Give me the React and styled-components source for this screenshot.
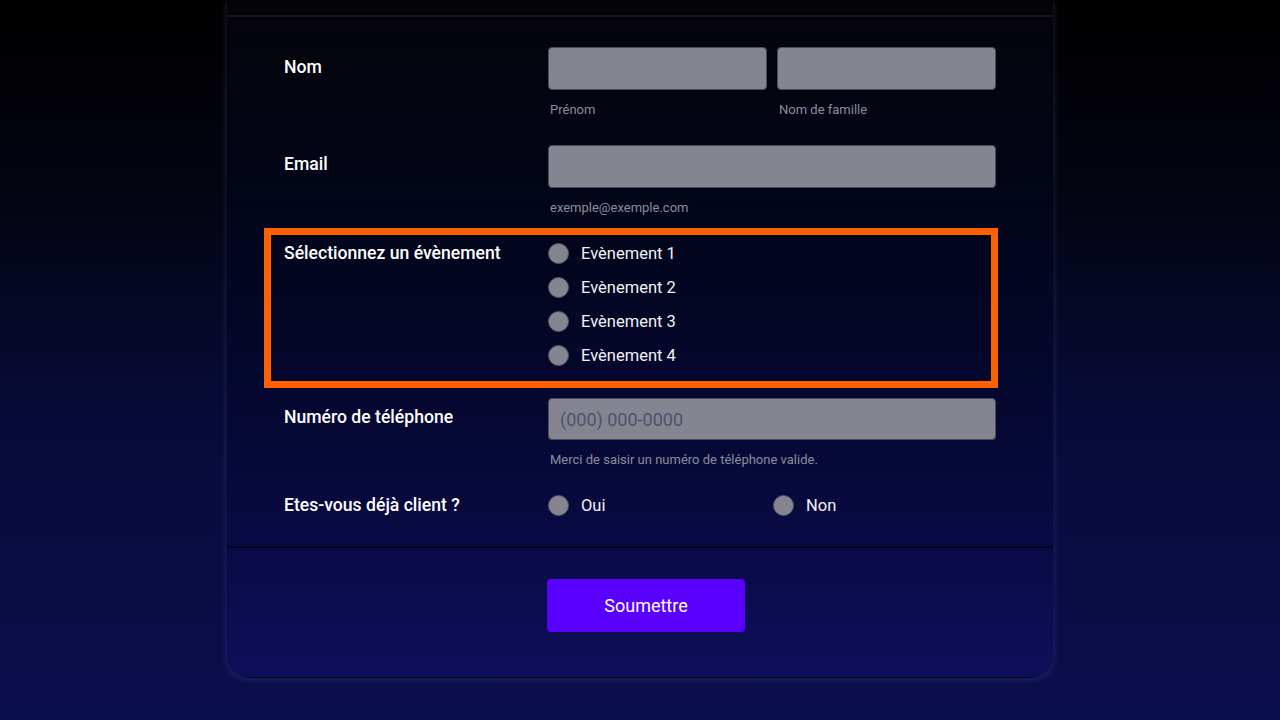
import React from 'react'
import styled, { createGlobalStyle } from 'styled-components';

const GlobalStyle = createGlobalStyle`
html, body { margin:0; padding:0; }
body {
  font-family: Roboto, "Liberation Sans", sans-serif;
  background: linear-gradient(180deg, #000000 0%, #03040f 25%, #080b3a 60%, #0b0e4c 100%);
  min-height: 720px;
}
`;

const Page = styled.div`
min-height:720px;
display:flex;
justify-content:center;
`;

const Card = styled.div`
width:828px;
box-sizing:border-box;
height:678px;
background:linear-gradient(180deg, #040408 0%, #02061f 40%, #08093f 75%, #0e0f5a 100%);
border:1px solid rgba(255, 255, 255, 0.035);
border-top:none;
border-radius:0 0 22px 22px;
box-shadow:0 2px 6px rgba(70, 80, 170, 0.35);
display:flex;
flex-direction:column;
`;

const CardHeader = styled.div`
height:15px;
border-bottom:2px solid #16151f;
`;

const FormBody = styled.div`
padding:20px 38px 14px 37px;
display:flex;
flex-direction:column;
border-bottom:2px solid #06061a;
`;

const Row = styled.div`
width:734px;
box-sizing:border-box;
display:grid;
grid-template-columns:264px 448px;
padding:${p => p.$highlight ? '15px 2px 23px 20px' : '10px 2px 17px 20px'};
margin-top:${p => p.$highlight ? '-5px' : '0'};
outline:${p => p.$highlight ? '7px solid #ff6100' : 'none'};
outline-offset:-7px;
`;

const Label = styled.div`
color:#ffffff;
font-size:17.6px;
font-weight:500;
line-height:20px;
padding-top:${p => p.$top || 0}px;
`;

const Field = styled.div`
display:flex;
flex-direction:column;
`;

const Pair = styled.div`
display:grid;
grid-template-columns:1fr 1fr;
column-gap:10px;
`;

const Input = styled.input`
box-sizing:border-box;
width:100%;
height:${p => p.$h || 43}px;
background:#858592;
border:1px solid #4c4c58;
border-radius:4px;
padding:0 11px;
font-family:Roboto, "Liberation Sans", sans-serif;
font-size:18px;
color:#222;
outline:none;
&::placeholder { color:#4d526c; }
`;

const Hint = styled.div`
margin-top:12px;
padding-left:2px;
font-size:13px;
line-height:16px;
color:#8a8d9c;
`;

const RadioList = styled.div`
display:flex;
flex-direction:column;
gap:14px;
`;

const RadioInline = styled.div`
display:grid;
grid-template-columns:225px 1fr;
`;

const RadioItem = styled.label`
display:flex;
align-items:center;
height:20px;
gap:12px;
color:#f2f2f6;
font-size:16.5px;
`;

const Circle = styled.span`
width:21px;
height:21px;
box-sizing:border-box;
border-radius:50%;
background:#858592;
border:1px solid #55555f;
flex-shrink:0;
`;

const Footer = styled.div`
display:flex;
justify-content:center;
padding:31px 0 45px 12px;
`;

const Button = styled.button`
width:198px;
height:53px;
border:none;
border-radius:4px;
background:#5a00ff;
color:#ffffff;
font-family:Roboto, "Liberation Sans", sans-serif;
font-size:18px;
cursor:pointer;
`;

const events = ['Evènement 1', 'Evènement 2', 'Evènement 3', 'Evènement 4'];

const App = () => {
    return (
        <Page>
            <GlobalStyle />
            <Card>
                <CardHeader />
                <FormBody>
                    <Row>
                        <Label $top={10}>Nom</Label>
                        <Field>
                            <Pair>
                                <div>
                                    <Input />
                                    <Hint>Prénom</Hint>
                                </div>
                                <div>
                                    <Input />
                                    <Hint>Nom de famille</Hint>
                                </div>
                            </Pair>
                        </Field>
                    </Row>
                    <Row>
                        <Label $top={9}>Email</Label>
                        <Field>
                            <Input />
                            <Hint>exemple@exemple.com</Hint>
                        </Field>
                    </Row>
                    <Row $highlight>
                        <Label $top={-2}>Sélectionnez un évènement</Label>
                        <RadioList>
                            {events.map(e => (
                                <RadioItem key={e}><Circle />{e}</RadioItem>
                            ))}
                        </RadioList>
                    </Row>
                    <Row>
                        <Label $top={9}>Numéro de téléphone</Label>
                        <Field>
                            <Input $h={42} placeholder="(000) 000-0000" />
                            <Hint>Merci de saisir un numéro de téléphone valide.</Hint>
                        </Field>
                    </Row>
                    <Row>
                        <Label>Etes-vous déjà client ?</Label>
                        <RadioInline>
                            <RadioItem><Circle />Oui</RadioItem>
                            <RadioItem><Circle />Non</RadioItem>
                        </RadioInline>
                    </Row>
                </FormBody>
                <Footer>
                    <Button>Soumettre</Button>
                </Footer>
            </Card>
        </Page>
    )
}

export default App
